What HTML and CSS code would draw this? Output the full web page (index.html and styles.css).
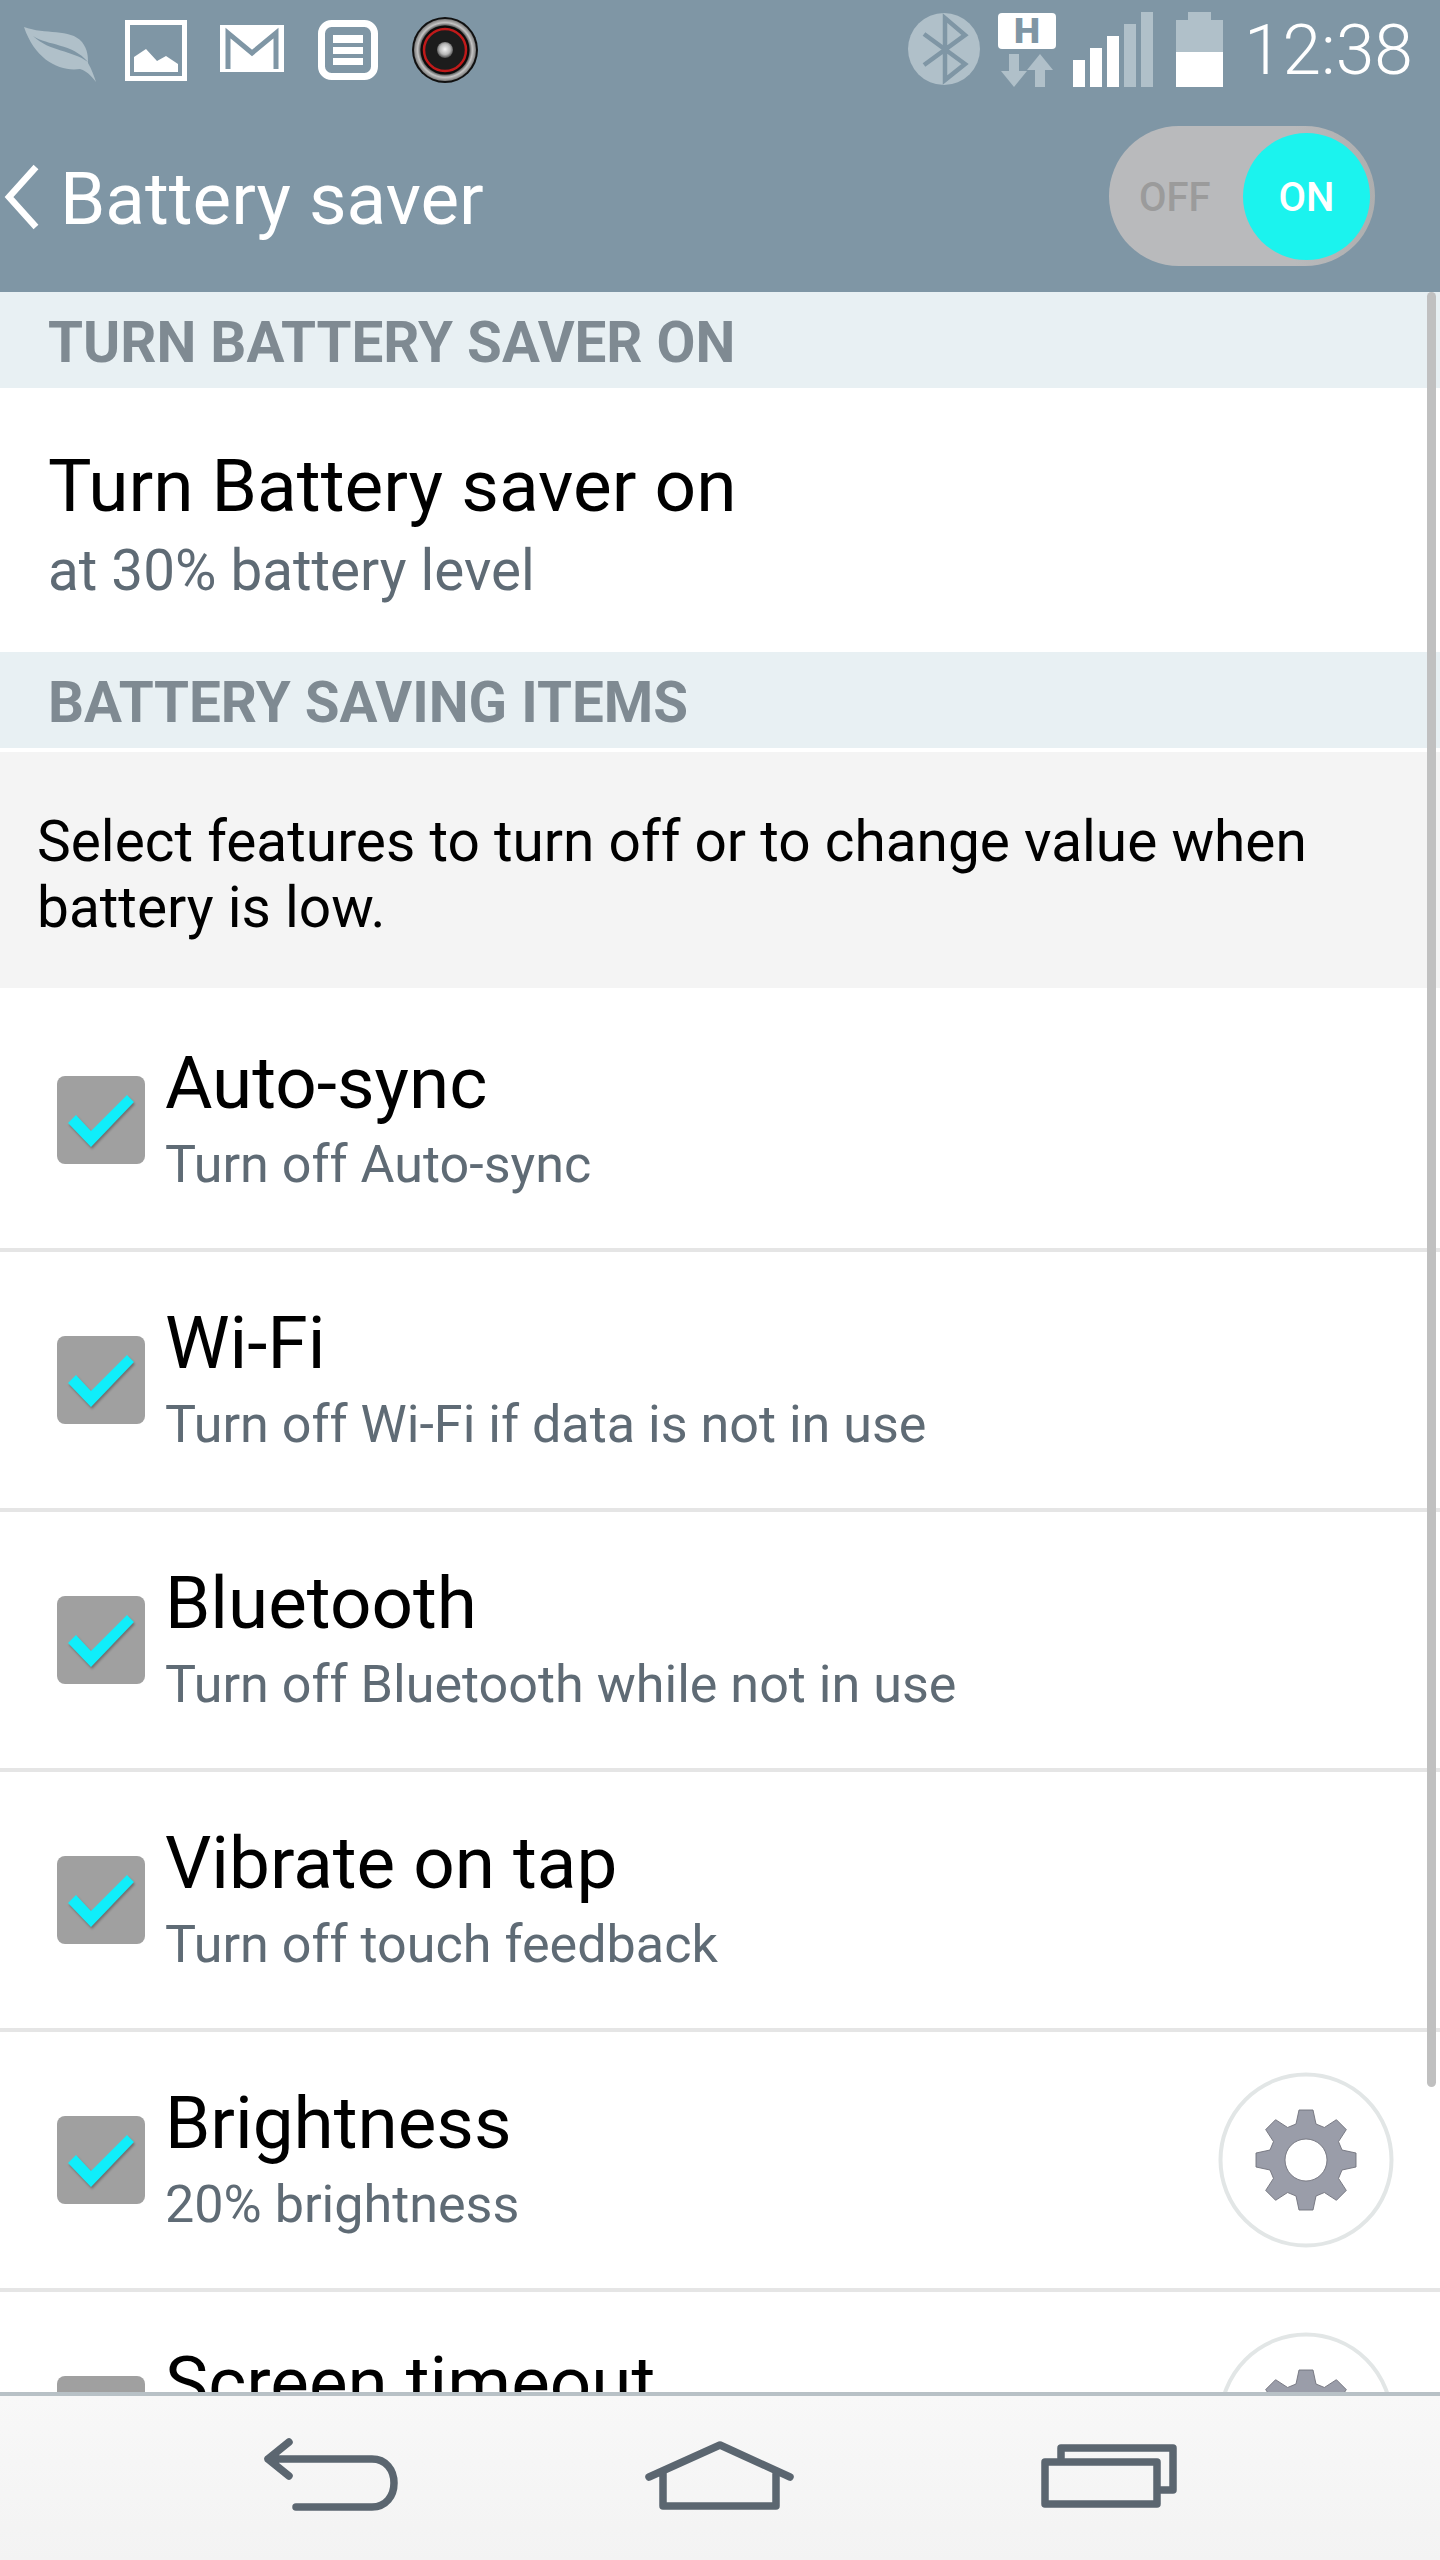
FILE: index.html
```html
<!DOCTYPE html>
<html lang="en">
<head>
<meta charset="utf-8">
<title>Battery saver</title>
<link rel="stylesheet" href="styles.css">
</head>
<body>
<svg class="defs" width="0" height="0" aria-hidden="true">
  <defs>
    <symbol id="checkbox" viewBox="0 0 88 88">
      <rect width="88" height="88" rx="8" fill="#a0a0a0"/>
      <polygon class="tick" points="19,39 11,47 34,71 77,26 70,19 34,55"/>
    </symbol>
    <symbol id="gear" viewBox="0 0 176 176">
      <circle cx="88" cy="88" r="85.5" fill="#fff" stroke="#e2e6e6" stroke-width="4"/>
      <path transform="translate(88 88)" fill="#9a9da9" stroke="#70727c" stroke-width="0.9" fill-rule="evenodd" d="M-10,-36 L-7,-50 L7,-50 L10,-36 L18.39,-32.53 L30.41,-40.31 L40.31,-30.41 L32.53,-18.39 L36,-10 L50,-7 L50,7 L36,10 L32.53,18.39 L40.31,30.41 L30.41,40.31 L18.39,32.53 L10,36 L7,50 L-7,50 L-10,36 L-18.39,32.53 L-30.41,40.31 L-40.31,30.41 L-32.53,18.39 L-36,10 L-50,7 L-50,-7 L-36,-10 L-32.53,-18.39 L-40.31,-30.41 L-30.41,-40.31 L-18.39,-32.53 Z M21,0 A21,21 0 1 0 -21,0 A21,21 0 1 0 21,0 Z"/>
    </symbol>
    <radialGradient id="spk-ring" cx="0.5" cy="0.5" r="0.5">
      <stop offset="0.78" stop-color="#4a4a4a"/>
      <stop offset="0.88" stop-color="#c4c4c4"/>
      <stop offset="1" stop-color="#7c7c7c"/>
    </radialGradient>
    <radialGradient id="spk-cap" cx="0.5" cy="0.45" r="0.55">
      <stop offset="0" stop-color="#f4f4f4"/>
      <stop offset="0.6" stop-color="#b8b8b8"/>
      <stop offset="1" stop-color="#4a4a4a"/>
    </radialGradient>
  </defs>
</svg>

<div class="phone">
  <header class="topbar">
    <div class="status">
      <div class="status-left">
        <svg class="ico" width="125" height="100" viewBox="0 0 125 100">
          <path class="dim" d="M24 27 C45 35 70 28 82 42 C88 50 88 57 88 63 C92 70 94 76 96 82 C90 74 86 71 80 69 C60 72 35 60 24 27 Z"/>
          <path class="cut" d="M33 36 C48 46 72 43 88 62 C72 50 50 52 33 36 Z"/>
        </svg>
        <svg class="ico" width="95" height="100" viewBox="125 0 95 100">
          <rect x="127.500" y="22.500" width="57" height="56" class="line-w" stroke-width="5"/>
          <polygon class="full" points="134,72 134,57 146,49 157,61 166,56 178,64 178,72"/>
        </svg>
        <svg class="ico" width="98" height="100" viewBox="220 0 98 100">
          <rect x="220" y="25" width="64" height="47" class="full"/>
          <path class="line-c" stroke-width="5" d="M228 69 V33 L252 53 L276 33 V69"/>
        </svg>
        <svg class="ico" width="93" height="100" viewBox="318 0 93 100">
          <rect x="321.500" y="23.500" width="53" height="53" rx="10" class="line-w" stroke-width="7"/>
          <rect x="333" y="35" width="30" height="8" class="full"/>
          <rect x="333" y="47" width="30" height="7" class="full"/>
          <rect x="333" y="58" width="30" height="7" class="full"/>
        </svg>
        <svg class="ico" width="68" height="100" viewBox="410 0 68 100">
          <circle cx="444" cy="50" r="33" fill="#111"/>
          <circle cx="444" cy="50" r="31" fill="url(#spk-ring)"/>
          <circle cx="444" cy="50" r="24.500" fill="#0d0d0d"/>
          <circle cx="444" cy="50" r="21" fill="#1c1c1c" stroke="#c01a1a" stroke-width="2.500"/>
          <circle cx="444" cy="50" r="8" fill="url(#spk-cap)"/>
        </svg>
      </div>
      <div class="status-right">
        <svg class="ico" width="90" height="100" viewBox="908 0 90 100">
          <ellipse cx="944" cy="49" rx="36" ry="36" class="dim"/>
          <path class="line-c" stroke-width="4.500" d="M924 34 L965 64 L945 80 V18 L965 35 L924 65"/>
        </svg>
        <svg class="ico" width="75" height="100" viewBox="998 0 75 100">
          <rect x="998" y="13" width="58" height="36" rx="4" class="full"/>
          <text x="1027" y="43" class="net">H</text>
          <polygon class="dim" points="1009,54 1019,54 1019,71 1027,71 1014,87 1001,71 1009,71"/>
          <polygon class="dim" points="1040,54 1053,70 1045,70 1045,87 1035,87 1035,70 1027,70"/>
        </svg>
        <svg class="ico" width="103" height="100" viewBox="1073 0 103 100">
          <rect x="1073" y="60" width="12" height="27" class="full"/>
          <rect x="1090" y="48" width="12" height="39" class="full"/>
          <rect x="1107" y="36" width="12" height="51" class="full"/>
          <rect x="1124" y="24" width="12" height="63" class="dim"/>
          <rect x="1141" y="12" width="12" height="75" class="dim"/>
        </svg>
        <svg class="ico" width="69" height="100" viewBox="1176 0 69 100">
          <polygon class="dim" points="1188,12 1211,12 1211,20 1223,20 1223,52 1176,52 1176,20 1188,20"/>
          <rect x="1176" y="52" width="47" height="35" class="full"/>
        </svg>
        <span class="clock">12:38</span>
      </div>
    </div>
    <div class="titlebar">
      <div class="title-left">
        <svg class="chevron" width="60" height="72" viewBox="0 0 60 72" aria-hidden="true">
          <path d="M36 7 L9 37 L36 67"/>
        </svg>
        <h1 class="title">Battery saver</h1>
      </div>
      <div class="toggle">
        <span class="toggle-off">OFF</span>
        <span class="toggle-knob">ON</span>
      </div>
    </div>
  </header>

  <main class="content">
    <div class="scrollbar"></div>
    <h2 class="section">TURN BATTERY SAVER ON</h2>
    <div class="threshold">
      <div class="threshold-title">Turn Battery saver on</div>
      <div class="threshold-sub">at 30% battery level</div>
    </div>
    <h2 class="section">BATTERY SAVING ITEMS</h2>
    <p class="intro">Select features to turn off or to change value when battery is low.</p>

    <div class="item">
      <svg class="check"><use href="#checkbox"/></svg>
      <div class="item-text">
        <div class="item-title">Auto-sync</div>
        <div class="item-sub">Turn off Auto-sync</div>
      </div>
    </div>
    <div class="item">
      <svg class="check"><use href="#checkbox"/></svg>
      <div class="item-text">
        <div class="item-title">Wi-Fi</div>
        <div class="item-sub">Turn off Wi-Fi if data is not in use</div>
      </div>
    </div>
    <div class="item">
      <svg class="check"><use href="#checkbox"/></svg>
      <div class="item-text">
        <div class="item-title">Bluetooth</div>
        <div class="item-sub">Turn off Bluetooth while not in use</div>
      </div>
    </div>
    <div class="item">
      <svg class="check"><use href="#checkbox"/></svg>
      <div class="item-text">
        <div class="item-title">Vibrate on tap</div>
        <div class="item-sub">Turn off touch feedback</div>
      </div>
    </div>
    <div class="item">
      <svg class="check"><use href="#checkbox"/></svg>
      <div class="item-text">
        <div class="item-title">Brightness</div>
        <div class="item-sub">20% brightness</div>
      </div>
      <svg class="gear"><use href="#gear"/></svg>
    </div>
    <div class="item">
      <svg class="check"><use href="#checkbox"/></svg>
      <div class="item-text">
        <div class="item-title">Screen timeout</div>
        <div class="item-sub"></div>
      </div>
      <svg class="gear"><use href="#gear"/></svg>
    </div>
  </main>

  <nav class="navbar">
    <svg class="nav-ico" width="160" height="164" viewBox="251 2396 160 164">
      <path d="M289 2442 L268 2459 L289 2476 M268 2459 H372 C386 2459 394 2470 394 2483 C394 2496 386 2507 372 2507 H296"/>
    </svg>
    <svg class="nav-ico" width="160" height="164" viewBox="640 2396 160 164">
      <path d="M649 2477 L720 2445 L790 2477 M663 2471 V2506 H776 V2471"/>
    </svg>
    <svg class="nav-ico" width="160" height="164" viewBox="1029 2396 160 164">
      <path d="M1061 2458 V2448 H1173 V2490 H1161"/>
      <rect x="1045" y="2462" width="112" height="42"/>
    </svg>
  </nav>
</div>
</body>
</html>
```
FILE: styles.css
```css
* { box-sizing: border-box; }

html, body {
  margin: 0;
  padding: 0;
  background: #fff;
}

body {
  font-family: Roboto, "Liberation Sans", sans-serif;
  color: #000;
}

.defs { position: absolute; }

.phone {
  width: 1440px;
  height: 2560px;
  display: flex;
  flex-direction: column;
  overflow: hidden;
}

/* top bar */
.topbar {
  height: 292px;
  flex: none;
  background: #7f96a5;
  color: #fff;
}

.status {
  height: 100px;
  display: flex;
  justify-content: space-between;
  padding: 0 28px 0 0;
}

.status-left, .status-right {
  display: flex;
  align-items: flex-start;
}

.ico { display: block; flex: none; }
.ico .full { fill: #fff; }
.ico .dim { fill: #b0c0c9; }
.ico .cut { fill: #7f96a5; }
.ico .line-w { fill: none; stroke: #fff; }
.ico .line-c { fill: none; stroke: #7f96a5; }
.ico .net {
  font-family: "DejaVu Sans", sans-serif;
  font-weight: 700;
  font-size: 34px;
  text-anchor: middle;
  fill: #7f96a5;
}

.clock {
  width: 168px;
  margin: 0 0 0 -1px;
  font-weight: 300;
  font-size: 69.500px;
  line-height: 100px;
  height: 100px;
  padding-top: 1px;
  white-space: nowrap;
}

.titlebar {
  height: 192px;
  display: flex;
  justify-content: space-between;
  align-items: center;
  padding: 0 65px 0 0;
}

.title-left {
  display: flex;
  align-items: center;
}

.chevron path {
  fill: none;
  stroke: #fff;
  stroke-width: 6.500;
}

.title {
  margin: 5px 0 0;
  font-weight: 400;
  font-size: 72.800px;
  line-height: 84px;
  color: #fff;
}

.toggle {
  width: 266px;
  height: 140px;
  border-radius: 70px;
  background: linear-gradient(90deg, #b9babc 70%, #aeaeae 100%);
  display: flex;
  align-items: center;
  justify-content: space-between;
  padding: 0 5px 0 30px;
  font-weight: 500;
  font-size: 40px;
}

.toggle-off {
  color: #9b9b9b;
  padding-top: 2px;
}

.toggle-knob {
  width: 127px;
  height: 127px;
  padding-top: 2px;
  border-radius: 50%;
  background: #1bf3ee;
  color: #fff;
  display: flex;
  align-items: center;
  justify-content: center;
}

/* list */
.content {
  flex: 1;
  min-height: 0;
  overflow: hidden;
  position: relative;
}

.scrollbar {
  position: absolute;
  top: 0;
  right: 4px;
  width: 9px;
  height: 1795px;
  border-radius: 5px;
  background: #c0c0c0;
}

.section {
  margin: 0;
  height: 96px;
  padding: 3px 0 0 48px;
  background: #e8f0f3;
  color: #7f8a92;
  font-weight: 700;
  font-size: 56.500px;
  line-height: 96px;
}

.threshold {
  height: 264px;
  padding: 58px 0 0 48px;
}

.threshold-title {
  font-size: 73px;
  line-height: 80px;
  margin-bottom: 8px;
}

.threshold-sub {
  font-size: 56.600px;
  line-height: 74px;
  color: #5f6b75;
}

.intro {
  margin: 4px 0 4px;
  height: 236px;
  padding: 57px 60px 0 37px;
  background: #f4f4f4;
  font-size: 56.800px;
  line-height: 66px;
}

.item {
  height: 260px;
  padding: 0 46px 0 57px;
  border-bottom: 4px solid #e5e5e5;
  display: flex;
  align-items: center;
}

.check {
  width: 88px;
  height: 88px;
  flex: none;
}

.tick {
  fill: #10eefa;
  filter: drop-shadow(1px 2px 1px rgba(0, 0, 0, 0.3));
}

.item-text {
  margin-left: 20px;
  padding-bottom: 2px;
  flex: 1;
  min-width: 0;
}

.item-title {
  font-size: 72.800px;
  line-height: 84px;
  white-space: nowrap;
}

.item-sub {
  margin-top: 7px;
  min-height: 66px;
  font-size: 52.100px;
  line-height: 66px;
  color: #5f6b75;
}

.gear {
  width: 176px;
  height: 176px;
  flex: none;
}

/* navigation */
.navbar {
  height: 168px;
  flex: none;
  border-top: 4px solid #b8c1c6;
  background: linear-gradient(180deg, #f8f8f8, #f3f3f3);
  display: flex;
  justify-content: center;
  gap: 229px;
}

.nav-ico { display: block; }

.nav-ico path, .nav-ico rect {
  fill: none;
  stroke: #5b6670;
  stroke-width: 7.500;
  stroke-linecap: round;
  stroke-linejoin: round;
}
```
